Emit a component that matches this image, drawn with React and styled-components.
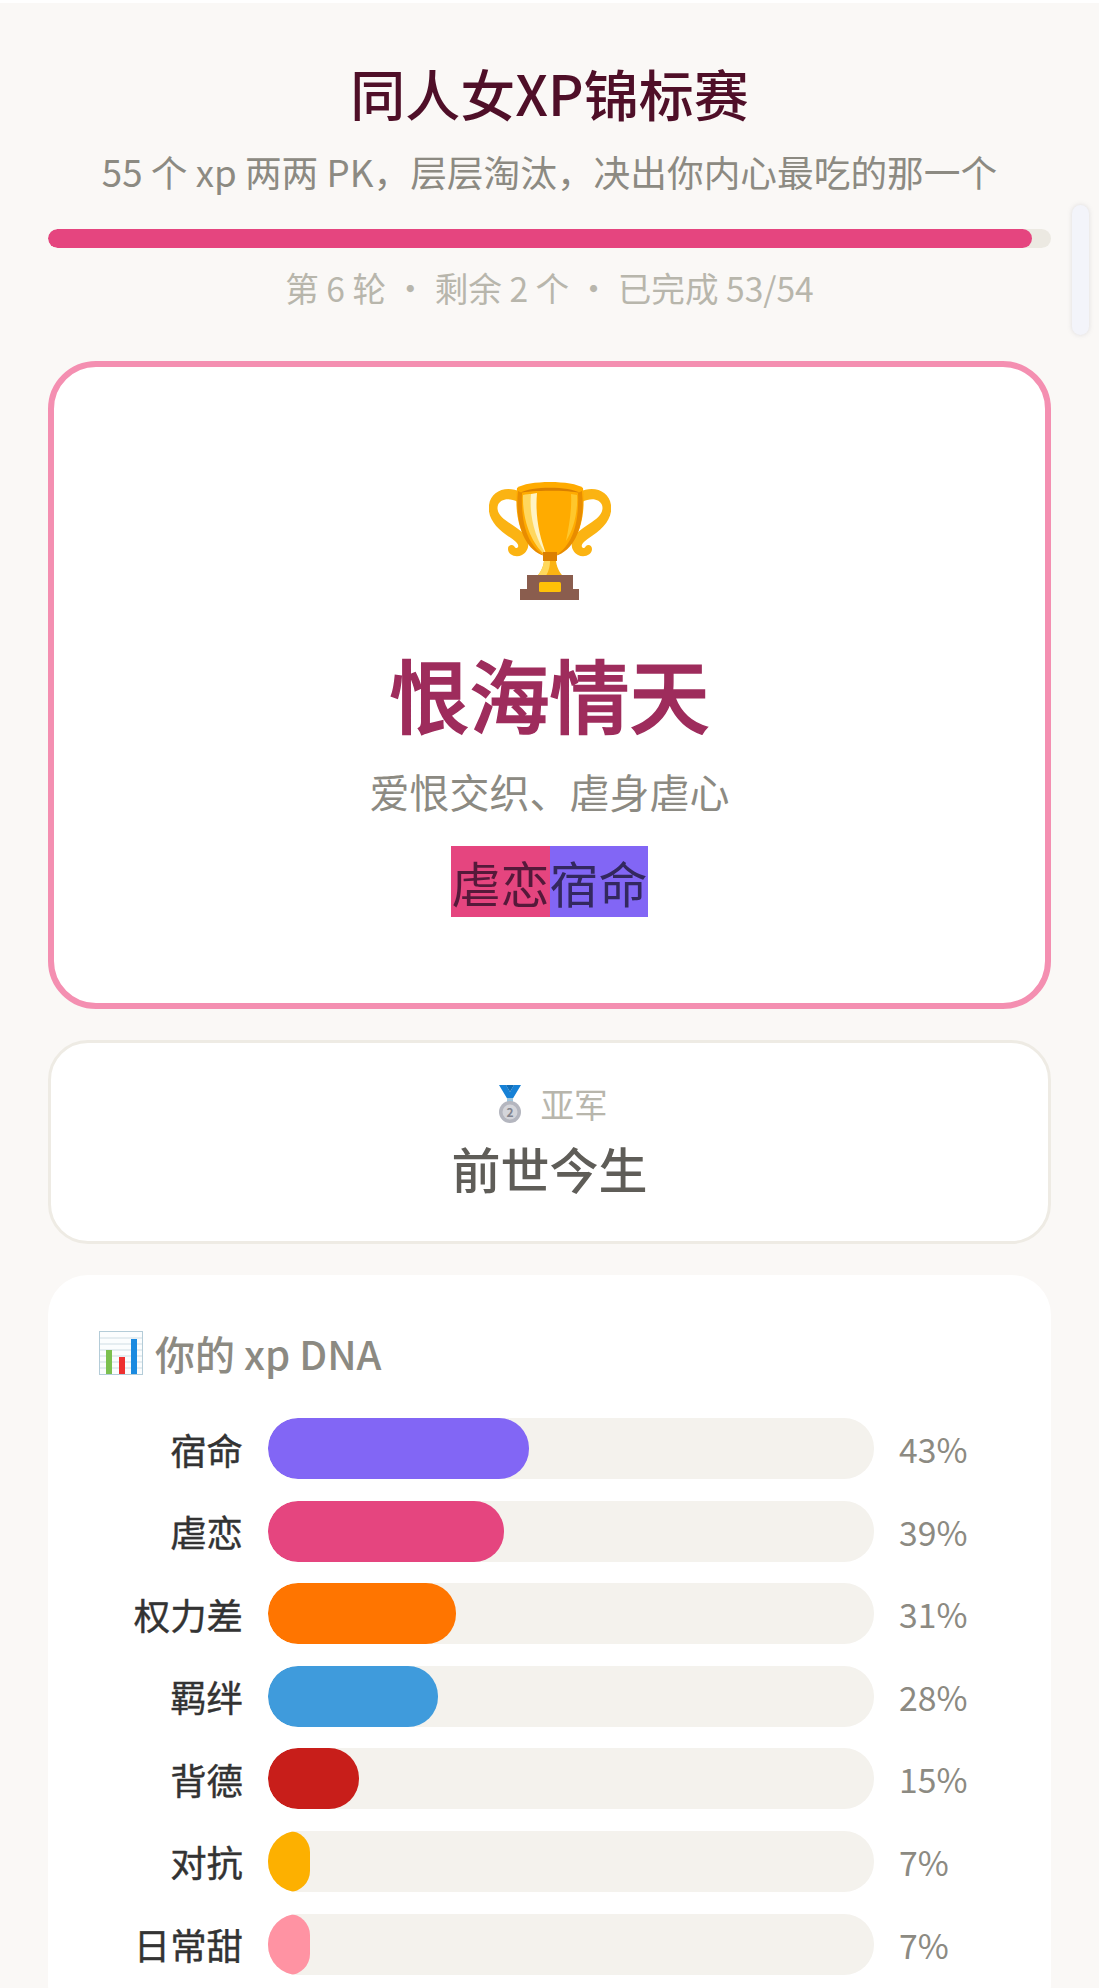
import React from 'react';
import styled, {createGlobalStyle} from 'styled-components';

const GlobalStyle = createGlobalStyle`
html, body {
  margin: 0;
  padding: 0;
  background: #ffffff;
}
body {
  font-family: "Noto Sans CJK SC", "Noto Sans", sans-serif;
}
`;

const dna = [
    {name: '宿命', pct: 43, color: '#8266f5'},
    {name: '虐恋', pct: 39, color: '#e5457f'},
    {name: '权力差', pct: 31, color: '#ff7500'},
    {name: '羁绊', pct: 28, color: '#3f9bdc'},
    {name: '背德', pct: 15, color: '#c81e1a'},
    {name: '对抗', pct: 7, color: '#fdb000'},
    {name: '日常甜', pct: 7, color: '#ff93a3'},
];

const TrophyIcon = () => (
    <svg width="122" height="120" viewBox="0 0 122 120">
        <path d="M32 12C17 5 2 11 0 25c-2 14 9 25 22 33 6 4 8 7 7 9-1 2-3 1-4-1-2-2-6-1-6 3 0 6 8 9 14 6 7-4 8-12 4-19-4-5-11-9-18-14C11 37 7 31 9 25c2-6 11-8 20-3z" fill="#fbb312"/>
        <path d="M90 12c15-7 30-1 32 13 2 14-9 25-22 33-6 4-8 7-7 9 1 2 3 1 4-1 2-2 6-1 6 3 0 6-8 9-14 6-7-4-8-12-4-19 4-5 11-9 18-14 8-5 12-11 10-17-2-6-11-8-20-3z" fill="#fbb312"/>
        <path d="M28 8C38 0 84 0 94 8c3 30-4 62-33 69C32 70 25 38 28 8z" fill="#ffab00"/>
        <path d="M31 13C42 6 80 6 91 13c-10-3-50-3-60 0z" fill="#d97f00"/>
        <path d="M29 11l4 2c-1 25 3 51 23 63C33 70 26 38 29 11z" fill="#e88c00"/>
        <path d="M93 11l-4 2c1 25-3 51-23 63 23-6 30-38 27-63z" fill="#e88c00"/>
        <path d="M34 15c3-1 6-1 9-1-2 21 3 42 15 62C43 66 33 40 34 15z" fill="#ffd75e"/>
        <path d="M42 14l6-1c-2 22 2 43 10 63C46 58 40 36 42 14z" fill="#fff3c4"/>
        <path d="M82 14l6 1c1 16-3 34-11 46 3-15 6-31 5-47z" fill="#ffc72c"/>
        <rect x="54" y="72" width="14" height="9" fill="#db7f00"/>
        <path d="M55 81h12c1 8 5 14 11 19H44c6-5 10-11 11-19z" fill="#fbb312"/>
        <path d="M55 81h6c0 8-3 14-7 19H44c6-5 10-11 11-19z" fill="#ffd85c"/>
        <path d="M38 95h46v15H38z" fill="#8a5d4e"/>
        <path d="M31 109h59v11H31z" fill="#8a5d4e"/>
        <rect x="50" y="102" width="22" height="10" rx="1.5" fill="#ffc107"/>
    </svg>
);

const MedalIcon = () => (
    <svg width="24" height="38" viewBox="0 0 24 38">
        <path d="M1 0h7l4 7 4-7h7l-9 15h-4z" fill="#1681d6"/>
        <path d="M8 0h8l-4 7z" fill="#0f6db8"/>
        <rect x="9" y="13" width="6" height="5" fill="#9fc5dc"/>
        <circle cx="12" cy="27" r="11" fill="#b4b6bf"/>
        <circle cx="12" cy="27" r="7.5" fill="#d4d5da"/>
        <text x="12" y="31.5" fontSize="12" fontWeight="700" textAnchor="middle" fill="#83858f">2</text>
    </svg>
);

const ChartIcon = () => (
    <svg width="44" height="44" viewBox="0 0 44 44">
        <rect x="0.5" y="0.5" width="43" height="43" fill="#fbfdfe" stroke="#b4ccd8"/>
        <path d="M1 7h42M1 13h42M1 19h42M1 25h42M1 31h42M1 37h42" stroke="#cfdde4" strokeWidth="1"/>
        <rect x="7" y="19" width="6" height="24" fill="#7cc04f"/>
        <rect x="20" y="26" width="6" height="17" fill="#ee3030"/>
        <rect x="32" y="8" width="6" height="35" fill="#1a8ae0"/>
    </svg>
);

export default function App() {
    return (
        <Page>
            <GlobalStyle/>
            <Scrollbar/>
            <Header>
                <Title>同人女XP锦标赛</Title>
                <Subtitle>55 个 xp 两两 PK，层层淘汰，决出你内心最吃的那一个</Subtitle>
            </Header>
            <ProgressTrack>
                <ProgressFill style={{width: `${(53 / 54) * 100}%`}}/>
            </ProgressTrack>
            <ProgressText>第 6 轮 ・ 剩余 2 个 ・ 已完成 53/54</ProgressText>

            <WinnerCard>
                <TrophyIcon/>
                <WinnerName>恨海情天</WinnerName>
                <WinnerDesc>爱恨交织、虐身虐心</WinnerDesc>
                <TagRow>
                    <Tag $bg="#e5457f" $fg="#55193a">虐恋</Tag>
                    <Tag $bg="#8266f5" $fg="#33285f">宿命</Tag>
                </TagRow>
            </WinnerCard>

            <RunnerCard>
                <RunnerLabel><MedalIcon/>亚军</RunnerLabel>
                <RunnerName>前世今生</RunnerName>
            </RunnerCard>

            <DnaCard>
                <DnaTitle><ChartIcon/>你的 xp DNA</DnaTitle>
                <DnaList>
                    {dna.map(item => (
                        <DnaRow key={item.name}>
                            <DnaName>{item.name}</DnaName>
                            <DnaTrack>
                                <DnaFill $color={item.color} style={{width: `${item.pct}%`}}/>
                            </DnaTrack>
                            <DnaValue>{item.pct}%</DnaValue>
                        </DnaRow>
                    ))}
                </DnaList>
            </DnaCard>
        </Page>
    );
}

const Page = styled.div`
position: relative;
box-sizing: border-box;
height: 1985px;
margin-top: 3px;
padding: 55px 48px 0;
background: #faf8f6;
overflow: hidden;
`;

const Scrollbar = styled.div`
position: absolute;
top: 202px;
right: 10px;
width: 17px;
height: 130px;
border-radius: 9px;
background: #f3f4fa;
box-shadow: 0 0 5px rgba(120, 120, 130, 0.22);
`;

const Header = styled.header`
text-align: center;
`;

const Title = styled.h1`
margin: 0;
font-size: 55px;
line-height: 68px;
font-weight: 500;
color: #4f0f28;
`;

const Subtitle = styled.p`
margin: 20px 0 0;
font-size: 36.7px;
line-height: 50px;
color: #8c8a82;
`;

const ProgressTrack = styled.div`
margin-top: 33px;
height: 19px;
border-radius: 10px;
background: #ece9e2;
overflow: hidden;
`;

const ProgressFill = styled.div`
height: 100%;
border-radius: 10px;
background: #e5457f;
`;

const ProgressText = styled.div`
margin-top: 16px;
text-align: center;
font-size: 33.6px;
line-height: 48px;
color: #b8b6ac;
`;

const WinnerCard = styled.section`
box-sizing: border-box;
display: flex;
flex-direction: column;
align-items: center;
height: 648px;
margin-top: 49px;
padding-top: 113px;
border: 6px solid #f48fb1;
border-radius: 48px;
background: #ffffff;
`;

const WinnerName = styled.div`
margin-top: 34px;
font-size: 80px;
line-height: 116px;
font-weight: 500;
-webkit-text-stroke: 1.5px #9e2c5c;
color: #9e2c5c;
`;

const WinnerDesc = styled.div`
margin-top: 12px;
font-size: 40px;
line-height: 58px;
color: #8c8a82;
`;

const TagRow = styled.div`
display: flex;
margin-top: 26px;
`;

const Tag = styled.span`
font-size: 49px;
line-height: 71px;
color: ${props => props.$fg};
background: ${props => props.$bg};
`;

const RunnerCard = styled.section`
box-sizing: border-box;
height: 204px;
margin-top: 31px;
padding-top: 38px;
border: 3px solid #eeebe4;
border-radius: 40px;
background: #ffffff;
text-align: center;
`;

const RunnerLabel = styled.div`
display: flex;
justify-content: center;
align-items: center;
gap: 18px;
padding-left: 7px;
font-size: 33.6px;
line-height: 46px;
color: #b8b6ac;
`;

const RunnerName = styled.div`
margin-top: 6px;
font-size: 49px;
line-height: 70px;
font-weight: 500;
color: #5f5d58;
`;

const DnaCard = styled.section`
box-sizing: border-box;
margin-top: 31px;
padding: 49px 49px 48px 51px;
border-radius: 40px;
background: #ffffff;
`;

const DnaTitle = styled.h2`
display: flex;
align-items: center;
gap: 12px;
margin: 0;
font-size: 40px;
line-height: 58px;
font-weight: 500;
color: #8c8a82;
`;

const DnaList = styled.div`
display: flex;
flex-direction: column;
gap: 21.6px;
margin-top: 36px;
`;

const DnaRow = styled.div`
display: grid;
grid-template-columns: 144px 1fr 103px;
column-gap: 25px;
align-items: center;
`;

const DnaName = styled.div`
text-align: right;
font-size: 36.4px;
font-weight: 400;
-webkit-text-stroke: 0.4px #333333;
color: #333333;
`;

const DnaTrack = styled.div`
height: 61px;
border-radius: 30px;
background: #f4f2ed;
overflow: hidden;
`;

const DnaFill = styled.div`
height: 100%;
border-radius: 30px;
background: ${props => props.$color};
`;

const DnaValue = styled.div`
font-size: 33.7px;
color: #8c8a82;
`;
